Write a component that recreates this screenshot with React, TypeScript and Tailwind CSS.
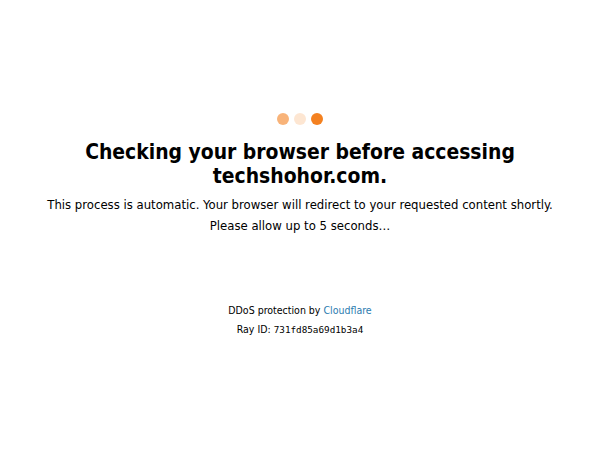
import React from "react";

export default function App() {
  return (
    <div className="w-[600px] h-[450px] bg-white flex flex-col items-center text-[#000] font-['DejaVu_Sans_Condensed','DejaVu_Sans',sans-serif] [font-stretch:condensed]">
      <div className="flex gap-[5px] mt-[113px]">
        <span className="w-3 h-3 rounded-full bg-[#f48120] opacity-60" />
        <span className="w-3 h-3 rounded-full bg-[#f48120] opacity-20" />
        <span className="w-3 h-3 rounded-full bg-[#f48120]" />
      </div>
      <h1 className="mt-[15px] text-[20.9px] leading-[24px] font-bold text-center w-[440px]">
        Checking your browser before accessing techshohor.com.
      </h1>
      <p className="mt-[6px] text-[13px] leading-[21px] text-center">
        This process is automatic. Your browser will redirect to your requested content shortly.
      </p>
      <p className="text-[13px] leading-[21px] text-center">Please allow up to 5 seconds…</p>
      <div className="mt-[65px] text-[10.5px] leading-[19px] text-center">
        DDoS protection by <a className="text-[#2c7cb0]">Cloudflare</a>
      </div>
      <div className="text-[10.5px] leading-[19px] text-center">
        Ray ID: <code className="font-['DejaVu_Sans_Mono',monospace] [font-stretch:normal] text-[9.3px]">731fd85a69d1b3a4</code>
      </div>
    </div>
  );
}
